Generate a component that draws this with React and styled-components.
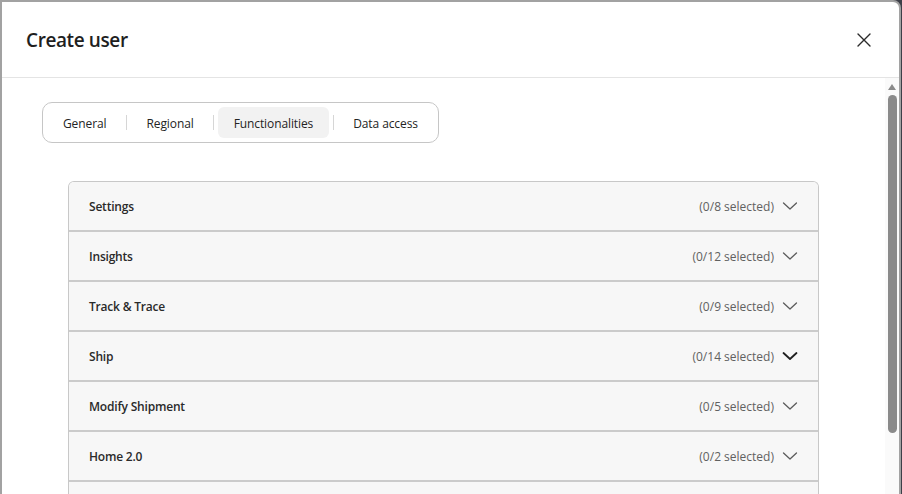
import styled, { createGlobalStyle } from 'styled-components'

const sections = [
	{ name: 'Settings', selected: 0, total: 8 },
	{ name: 'Insights', selected: 0, total: 12 },
	{ name: 'Track & Trace', selected: 0, total: 9 },
	{ name: 'Ship', selected: 0, total: 14, active: true },
	{ name: 'Modify Shipment', selected: 0, total: 5 },
	{ name: 'Home 2.0', selected: 0, total: 2 },
	{ name: 'Reports', selected: 0, total: 6 },
]

const tabs = ['General', 'Regional', 'Functionalities', 'Data access']

export default function App() {
	return (
		<>
			<GlobalStyle />
			<Dialog>
				<Header>
					<Title>Create user</Title>
					<CloseButton aria-label="Close">
						<svg width="16" height="16" viewBox="0 0 16 16">
							<path
								d="M2 2 L14 14 M14 2 L2 14"
								stroke="#2b2b2b"
								strokeWidth="1.4"
								strokeLinecap="round"
							/>
						</svg>
					</CloseButton>
				</Header>
				<Body>
					<Content>
						<TabList>
							{tabs.map((t, i) => (
								<TabGroup key={t}>
									{i > 0 && <Separator />}
									<Tab $active={t === 'Functionalities'}>{t}</Tab>
								</TabGroup>
							))}
						</TabList>
						<Accordion>
							{sections.map((s) => (
								<Item key={s.name}>
									<ItemName>{s.name}</ItemName>
									<ItemRight>
										<Count>
											({s.selected}/{s.total} selected)
										</Count>
										<svg width="16" height="16" viewBox="0 0 16 16">
											<path
												d="M1.5 5 L8 11 L14.5 5"
												fill="none"
												stroke={s.active ? '#1f1f1f' : '#5c5c5c'}
												strokeWidth={s.active ? 1.8 : 1.3}
												strokeLinecap="round"
												strokeLinejoin="round"
											/>
										</svg>
									</ItemRight>
								</Item>
							))}
						</Accordion>
					</Content>
					<Scrollbar>
						<ScrollArrow />
						<Thumb />
					</Scrollbar>
				</Body>
			</Dialog>
		</>
	)
}

const GlobalStyle = createGlobalStyle`
	html, body {
		margin: 0;
		padding: 0;
		overflow: hidden;
		background: #3d3f48;
	}
	* {
		box-sizing: border-box;
	}
`

const Dialog = styled.div`
	width: 901px;
	height: 560px;
	background: #fff;
	border: 2px solid #a2a2a2;
	border-radius: 0 8px 0 0;
	display: flex;
	flex-direction: column;
	overflow: hidden;
	font-family: 'Open Sans', 'Noto Sans', sans-serif;
	color: #242424;
`

const Header = styled.div`
	height: 76px;
	flex-shrink: 0;
	display: flex;
	align-items: center;
	justify-content: space-between;
	padding: 0 27px 0 24px;
	border-bottom: 1px solid #e4e4e4;
`

const Title = styled.h1`
	margin: 0;
	font-size: 19px;
	font-weight: 600;
	color: #1f1f1f;
	letter-spacing: -0.4px;
`

const CloseButton = styled.button`
	border: none;
	background: none;
	padding: 0;
	width: 16px;
	height: 16px;
	display: flex;
	cursor: pointer;
`

const Body = styled.div`
	flex: 1;
	position: relative;
	overflow: hidden;
`

const Content = styled.div`
	padding: 24px 0 0 40px;
`

const TabList = styled.div`
	display: inline-flex;
	align-items: center;
	height: 41px;
	padding: 0 4px;
	border: 1px solid #c6c6c6;
	border-radius: 10px;
`

const TabGroup = styled.div`
	display: flex;
	align-items: center;
`

const Separator = styled.span`
	width: 1px;
	height: 15px;
	background: #d6d6d6;
	margin: 0 3.5px;
`

const Tab = styled.button`
	height: 31px;
	padding: 2px 16px 0;
	border: none;
	border-radius: 6px;
	background: ${(p) => (p.$active ? '#f2f2f2' : 'transparent')};
	font-family: inherit;
	font-size: 12px;
	letter-spacing: -0.1px;
	color: #242424;
	cursor: pointer;
`

const Accordion = styled.div`
	width: 751px;
	margin: 38px 0 0 26px;
	border: 1px solid #c8c8c8;
	border-bottom: none;
	border-radius: 6px 6px 0 0;
	overflow: hidden;
`

const Item = styled.div`
	height: 50px;
	display: flex;
	align-items: center;
	justify-content: space-between;
	padding: 0 20px;
	background: #f7f7f7;
	border-bottom: 2px solid #cbcbcb;
`

const ItemName = styled.span`
	font-size: 12px;
	font-weight: 600;
	letter-spacing: -0.2px;
	color: #2a2a2a;
`

const ItemRight = styled.div`
	display: flex;
	align-items: center;
	gap: 8px;
`

const Count = styled.span`
	font-size: 12px;
	color: #616161;
`

const Scrollbar = styled.div`
	position: absolute;
	top: 0;
	right: 0;
	bottom: 0;
	width: 14px;
	background: #fafafa;
	display: flex;
	flex-direction: column;
	align-items: center;
	padding-top: 6px;
	gap: 5px;
`

const ScrollArrow = styled.span`
	width: 0;
	height: 0;
	border-left: 4px solid transparent;
	border-right: 4px solid transparent;
	border-bottom: 6px solid #8a8a8a;
`

const Thumb = styled.span`
	width: 9px;
	height: 338px;
	border-radius: 5px;
	background: #8a8a8a;
`
